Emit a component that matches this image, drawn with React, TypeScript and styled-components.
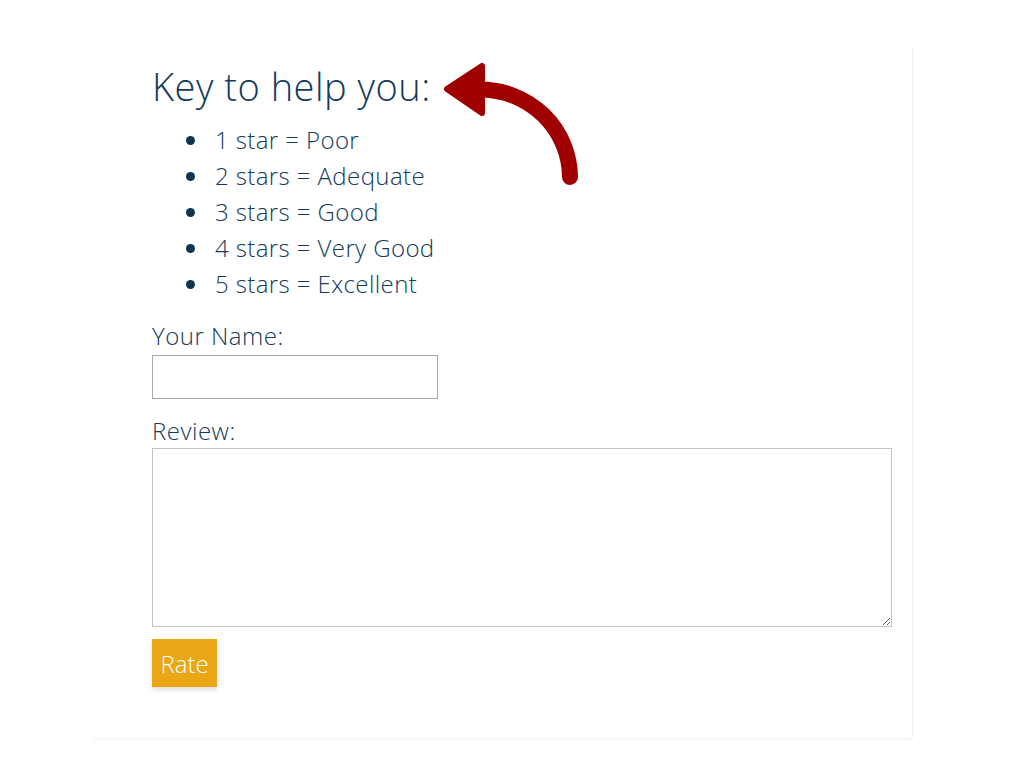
import * as React from 'react'
import styled, { createGlobalStyle } from 'styled-components'

//=================================/
const GlobalStyle = createGlobalStyle`
    html, body {
        margin: 0;
        padding: 0;
        background: #ffffff;
    }
    body {
        font-family: "Open Sans", "Liberation Sans", sans-serif;
        font-weight: 300;
        color: #143a5c;
    }
`;

const Page = styled.div`
    width: 1024px;
    height: 768px;
    padding-top: 45px;
    box-sizing: border-box;
`;

const Card = styled.div`
    position: relative;
    width: 820px;
    height: 693px;
    margin-left: 92px;
    box-sizing: border-box;
    padding: 16px 20px 0 60px;
    border-radius: 0 4px 4px 0;
    box-shadow: 1px 1px 3px rgba(0, 0, 0, 0.08);
`;

const Heading = styled.h2`
    margin: 0;
    font-size: 38px;
    font-weight: 300;
    line-height: 50px;
    letter-spacing: 0.5px;
    color: #143a5c;
`;

const KeyList = styled.ul`
    margin: 11px 0 0 0;
    padding-left: 63px;
    list-style: none;
`;

const KeyItem = styled.li`
    position: relative;
    font-size: 24px;
    line-height: 36px;
    letter-spacing: 0.4px;
    color: #143a5c;
    &::before {
        content: '';
        position: absolute;
        left: -29px;
        top: 14px;
        width: 9px;
        height: 9px;
        border-radius: 50%;
        background: #0b3552;
    }
`;

const Field = styled.div<{ $gap: number }>`
    display: flex;
    flex-direction: column;
    align-items: flex-start;
    margin-top: ${p => p.$gap}px;
`;

const Label = styled.label`
    font-size: 24px;
    line-height: 30px;
    letter-spacing: 0.5px;
    color: #143a5c;
`;

const NameInput = styled.input`
    width: 286px;
    height: 44px;
    box-sizing: border-box;
    border: 1px solid #a9a9a9;
    margin: 4px 0 0 0;
    padding: 4px 8px;
    font-family: inherit;
    font-size: 18px;
    outline: none;
`;

const ReviewArea = styled.textarea`
    width: 740px;
    height: 179px;
    box-sizing: border-box;
    border: 1px solid #c4c4c4;
    margin: 2px 0 0 0;
    padding: 6px 8px;
    font-family: inherit;
    font-size: 18px;
    outline: none;
    resize: both;
`;

const RateButton = styled.button`
    margin-top: 12px;
    width: 65px;
    height: 48px;
    border: none;
    background: #e9a615;
    color: #ffffff;
    font-family: "Open Sans", "Liberation Sans", sans-serif;
    font-weight: 300;
    font-size: 24px;
    padding: 0;
    box-shadow: 0 3px 4px rgba(0, 0, 0, 0.12);
    cursor: pointer;
`;

const Arrow = styled.svg`
    position: absolute;
    left: 340px;
    top: 15px;
    overflow: visible;
`;
//=================================/

const keys = [
    '1 star = Poor',
    '2 stars = Adequate',
    '3 stars = Good',
    '4 stars = Very Good',
    '5 stars = Excellent',
];

//=====================================================================================//
//
//
//
export default function App() {
    return (
        <Page>
            <GlobalStyle />
            <Card>
                <Heading>Key to help you:</Heading>
                <KeyList>
                    {keys.map(k => <KeyItem key={k}>{k}</KeyItem>)}
                </KeyList>

                <Field $gap={19}>
                    <Label htmlFor="name">Your Name:</Label>
                    <NameInput id="name" type="text" />
                </Field>

                <Field $gap={17}>
                    <Label htmlFor="review">Review:</Label>
                    <ReviewArea id="review" />
                </Field>

                <RateButton>Rate</RateButton>

                {/* annotation arrow, coords relative to card (92,45) */}
                <Arrow width="150" height="130" viewBox="340 15 150 130">
                    <path
                        d="M 388 44.5 A 90 88 0 0 1 478 132"
                        fill="none"
                        stroke="#a00000"
                        strokeWidth="16"
                        strokeLinecap="round"
                    />
                    <polygon
                        points="355,44 390,21 390,68"
                        fill="#a00000"
                        stroke="#a00000"
                        strokeWidth="6"
                        strokeLinejoin="round"
                    />
                </Arrow>
            </Card>
        </Page>
    );
}

//=====================================================================================//
